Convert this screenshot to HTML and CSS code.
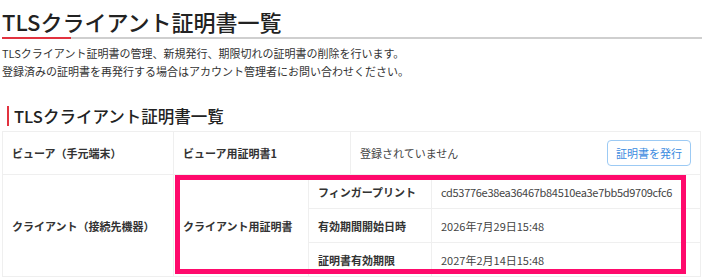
FILE: index.html
```html
<!DOCTYPE html>
<html lang="ja">
  <head>
    <meta charset="UTF-8" />
    <title>TLSクライアント証明書一覧</title>
    <link rel="stylesheet" href="styles.css">
  </head>
  <body>
    <div id="page">
      <h1 class="page-title">TLSクライアント証明書一覧</h1>
      <p class="lead">
        TLSクライアント証明書の管理、新規発行、期限切れの証明書の削除を行います。<br />
        登録済みの証明書を再発行する場合はアカウント管理者にお問い合わせください。
      </p>

      <h2 class="section-title">TLSクライアント証明書一覧</h2>
      <div class="table-wrap">
        <table class="cert-table">
          <colgroup>
            <col style="width: 171px" />
            <col style="width: 135px" />
            <col style="width: 42px" />
            <col style="width: 81px" />
            <col style="width: 269px" />
          </colgroup>
          <tr class="row-main">
            <th>ビューア（手元端末）</th>
            <th colspan="2">ビューア用証明書1</th>
            <td colspan="2">
              <div class="cell-flex">
                <span>登録されていません</span>
                <button class="issue-button">証明書を発行</button>
              </div>
            </td>
          </tr>
          <tr>
            <th rowspan="3">クライアント（接続先機器）</th>
            <th rowspan="3">クライアント用証明書</th>
            <th colspan="2">フィンガープリント</th>
            <td class="fingerprint">cd53776e38ea36467b84510ea3e7bb5d9709cfc6</td>
          </tr>
          <tr>
            <th colspan="2">有効期間開始日時</th>
            <td>2026年7月29日15:48</td>
          </tr>
          <tr>
            <th colspan="2">証明書有効期限</th>
            <td>2027年2月14日15:48</td>
          </tr>
        </table>
        <!-- 注目枠 -->
        <div class="highlight"></div>
      </div>
    </div>
  </body>
</html>
```

FILE: styles.css
```css
html {
  height: 100%;
}
body {
  margin: 0;
  background-color: #fff;
  color: #333;
  font-family: "Noto Sans CJK JP", "Noto Sans", sans-serif;
}
#page {
  padding: 0 2px;
}

.page-title {
  margin: 0;
  padding-top: 6px;
  padding-bottom: 1px;
  font-size: 22px;
  font-weight: 500;
  line-height: 30px;
  color: #222;
  border-bottom: 2px solid #ccc;
  /* 左端だけ赤 */
  border-image: linear-gradient(to right, #e2323f 70px, #cfcfcf 70px) 1;
}

.lead {
  margin: 5px 0 0;
  font-size: 11px;
  line-height: 18px;
  color: #333;
}

.section-title {
  margin: 26px 0 0 5px;
  padding-left: 5px;
  border-left: 2px solid #e2323f;
  font-size: 16.5px;
  font-weight: 500;
  line-height: 20px;
  color: #222;
}

.table-wrap {
  position: relative;
  margin-top: 5px;
}

.cert-table {
  width: 698px;
  table-layout: fixed;
  border-collapse: collapse;
  font-size: 11px;
}
.cert-table th,
.cert-table td {
  border: 1px solid #efefef;
  padding: 0 9px;
  height: 33px;
  text-align: left;
  white-space: nowrap;
}
.cert-table th {
  font-weight: bold;
  color: #333;
}
.cert-table td {
  color: #444;
}
.cert-table .row-main th,
.cert-table .row-main td {
  height: 42px;
}
.cert-table .fingerprint {
  letter-spacing: -0.3px;
}
.cell-flex {
  display: flex;
  align-items: center;
  justify-content: space-between;
}

.issue-button {
  height: 26px;
  padding: 0 8px;
  background: #fff;
  border: 1px solid #9ccaf4;
  border-radius: 4px;
  color: #3b8be0;
  font-family: inherit;
  font-size: 11px;
  cursor: pointer;
}

.highlight {
  position: absolute;
  top: 44px;
  left: 173px;
  width: 501px;
  height: 89px;
  border: 5px solid #ff0a6c;
  pointer-events: none;
}
```
